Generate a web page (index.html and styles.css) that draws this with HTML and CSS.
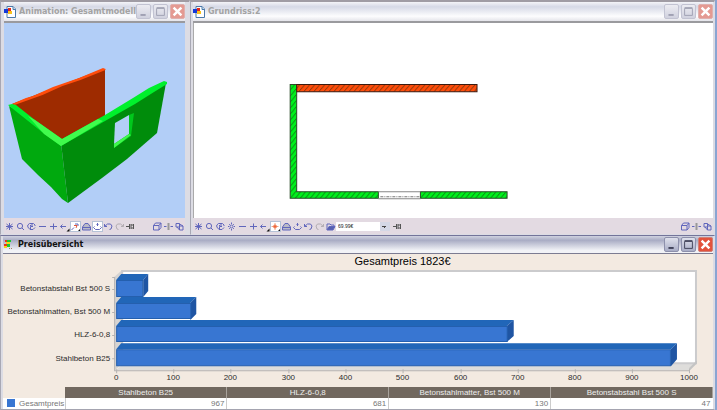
FILE: index.html
```
<!DOCTYPE html>
<html lang="de">
<head>
<meta charset="utf-8">
<title>Preisübersicht</title>
<link rel="stylesheet" href="styles.css">
</head>
<body>
<svg class="defs" aria-hidden="true">
  <defs>
    <symbol id="app" viewBox="0 0 12 12"><path d="M3 .5h6l2.500 2.500v8.500H3z" fill="#fff" stroke="#4b78a8"/><path d="M9 .5v3h2.500" fill="#cfe6f5" stroke="#4b78a8"/><path d="M0 3h4v4H0z" fill="#1238d8"/><path d="M4 2h3v3H4z" fill="#e3291c"/><path d="M4 5h4v3H4z" fill="#f8c21c"/></symbol>
    <symbol id="price" viewBox="0 0 12 12"><path d="M2 1h3v2H2zM1 5h3v2H1z" fill="#e8321e"/><path d="M4 1h4v2H4zM4 5h3v3H4z" fill="#18c832"/><path d="M3 3h4v2H3zM1 7h3v2H1z" fill="#f5d31a"/><path d="M6 9h1v1H6zM8 9h1v1H8z" fill="#a08060"/></symbol>
    <symbol id="min" viewBox="0 0 15 14"><path d="M4 10h6v2H4z" fill="currentColor"/></symbol>
    <symbol id="max" viewBox="0 0 15 14"><path d="M3 3.500h9v8H3zM3 2.500h9" fill="none" stroke="currentColor"/></symbol>
    <symbol id="close" viewBox="0 0 15 14"><path d="M3 2.500l9 9M12 2.500l-9 9" stroke="#fff" stroke-width="2.800"/></symbol>
    <symbol id="star" viewBox="0 0 11 11"><path d="M2.500 3l6 5M8.500 3l-6 5M5.500 2v7M2 5.500h7"/></symbol>
    <symbol id="lens" viewBox="0 0 11 11"><circle cx="5" cy="5" r="2.600"/><path d="M7 7l2 2"/></symbol>
    <symbol id="hand" viewBox="0 0 11 11"><path d="M4 8.500L1.800 6V4l1.700-1.500h4L9 4v1M4 8.500h3l2-2M4 5l1-1h2M4.500 8V5.500H7"/></symbol>
    <symbol id="sun" viewBox="0 0 11 11"><circle cx="5.500" cy="5.500" r="1.500"/><path d="M5.500 1.500V3M5.500 8v1.500M2 5.500h1M8 5.500h1M3 3l.8.800M8 3l-.8.800M3 8l.8-.8M8 8l-.8-.8"/></symbol>
    <symbol id="minus" viewBox="0 0 11 11"><path d="M2 5.500h7"/></symbol>
    <symbol id="plus" viewBox="0 0 11 11"><path d="M2 5.500h7M5.500 2.500v6"/></symbol>
    <symbol id="move" viewBox="0 0 11 11"><path d="M1.500 5.500H7M3.500 3.500l-2 2 2 2"/><path d="M10.500 7.500v3h-3z" fill="#111" stroke="none"/></symbol>
    <symbol id="walk" viewBox="0 0 11 11"><path d="M1.500 9L4 6.500M5 3h3v2"/><path d="M4 4.500h3L6 7" stroke="#e0573c"/><path d="M10.500 7.500v3h-3z" fill="#111" stroke="none"/></symbol>
    <symbol id="target" viewBox="0 0 11 11"><path d="M5 2v7M1.500 5.500h7" stroke="#f0a080"/><circle cx="5" cy="5.500" r="1.500" fill="#f0643c" stroke="#f0845a"/><path d="M10.500 7.500v3h-3z" fill="#111" stroke="none"/></symbol>
    <symbol id="house" viewBox="0 0 11 11"><path d="M1.500 6L4 2.500h3L9.500 6v3h-8z" fill="#b9b9c6"/><path d="M1.500 6.500h8"/></symbol>
    <symbol id="orbit" viewBox="0 0 11 11"><path d="M5.500 2v3M4.500 3.500h2M2.500 5.500l-1 1 2 2h4l2-2-1-1"/></symbol>
    <symbol id="undo" viewBox="0 0 11 11"><path d="M1.500 3v2.500H4M1.500 5.500l3-2.500h3l1.500 2-1 3-1.500.5"/></symbol>
    <symbol id="redo" viewBox="0 0 11 11"><path d="M9.500 3v2.500H7M9.500 5.500L6.500 3h-3L2 5l1 3 1.500.5"/></symbol>
    <symbol id="folder" viewBox="0 0 11 11"><path d="M2 9V3h3l1 1h3v2" fill="none"/><path d="M2 9l2-3.500h6L8 9z" fill="#5661b0"/></symbol>
    <symbol id="pin" viewBox="0 0 11 11"><path d="M1 5.500h3M4.500 3v5M6 3v5M8.500 3v5M6 4h3M6 7h3"/></symbol>
    <symbol id="cube" viewBox="0 0 11 11"><path d="M1.500 4.500h5.500V9H1.500zM1.500 4.500l2-2.500H9L7 4.500M9 2v4.500L7 9"/></symbol>
    <symbol id="split" viewBox="0 0 11 11"><path d="M5.500 2v7" stroke="#999" stroke-width="2"/><path d="M1 5.500h2.500M7.500 5.500H10"/></symbol>
    <symbol id="copy" viewBox="0 0 11 11"><path d="M2 2.500h3.500V6H2zM5.500 5H9v4H5.500zM3 6l2.500 3M5.500 3L9 5"/></symbol>
  </defs>
</svg>
<main class="desk">
  <section class="win win-model" aria-label="Animation">
    <header class="bar">
      <svg class="logo"><use href="#app"/></svg>
      <h1>Animation: Gesamtmodell</h1>
      <button class="ctl" aria-label="Minimieren"><svg><use href="#min"/></svg></button>
      <button class="ctl" aria-label="Maximieren"><svg><use href="#max"/></svg></button>
      <button class="ctl ctl-close" aria-label="Schließen"><svg><use href="#close"/></svg></button>
    </header>
    <div class="view view-model">
      <svg viewBox="4 23 181 195" preserveAspectRatio="xMinYMin meet" role="img" aria-label="3D-Modell">
        <path d="M12 104L103 69l2 1v50l-43 24z" fill="#9e2b00"/>
        <path d="M12 104l14-6 7-2 20-9 26-9 24-10 2.500 1v1l-25 10-18 6-20 9-28 10z" fill="#ff4d0c"/>
        <path d="M9 106l4 2 48 35 7 60-6-4-11-12-13-12-16-16z" fill="#00a90e"/>
        <path d="M61 143l40-23 65-37-9 50-30 26-25 19-34 25z" fill="#008c0b"/>
        <path d="M8 105l4-1 4 1 19 15 27 19 43-24 28-17 16-10 15-7 3 1v2l-13 8-19 12-30 17-44 25-19-14z" fill="#00f02c"/>
        <path d="M28 116l7 4 27 19 36-20 5 2-42 25-17-12z" fill="#41fb4d"/>
        <path d="M129 115l5-2-3 23-17 12v-4l15-10z" fill="#00c81c"/>
        <path d="M115 123l14-8v19l-15 10z" fill="#b3cff7"/>
        <path d="M114 144l15-10 2 1-17 13z" fill="#3ff84c"/>
      </svg>
    </div>
    <div class="tools" role="toolbar" aria-label="Ansicht">
      <button aria-label="Alles zeigen"><svg><use href="#star"/></svg></button>
      <button aria-label="Lupe"><svg><use href="#lens"/></svg></button>
      <button aria-label="Verschieben"><svg><use href="#hand"/></svg></button>
      <button aria-label="Kleiner"><svg><use href="#minus"/></svg></button>
      <button aria-label="Größer"><svg><use href="#plus"/></svg></button>
      <button aria-label="Bewegen"><svg><use href="#move"/></svg></button>
      <button class="on" aria-label="Gehen"><svg><use href="#walk"/></svg></button>
      <button aria-label="Haus"><svg><use href="#house"/></svg></button>
      <button class="on" aria-label="Umkreisen"><svg><use href="#orbit"/></svg></button>
      <button aria-label="Zurück"><svg><use href="#undo"/></svg></button>
      <button class="off" aria-label="Vor"><svg><use href="#redo"/></svg></button>
      <button class="dark" aria-label="Anheften"><svg><use href="#pin"/></svg></button>
      <span class="push"></span>
      <button aria-label="Perspektive"><svg><use href="#cube"/></svg></button>
      <button aria-label="Teilen"><svg><use href="#split"/></svg></button>
      <button aria-label="Fenster"><svg><use href="#copy"/></svg></button>
    </div>
  </section>

  <section class="win win-plan" aria-label="Grundriss">
    <header class="bar">
      <svg class="logo"><use href="#app"/></svg>
      <h1>Grundriss:2</h1>
      <button class="ctl" aria-label="Minimieren"><svg><use href="#min"/></svg></button>
      <button class="ctl" aria-label="Maximieren"><svg><use href="#max"/></svg></button>
      <button class="ctl ctl-close" aria-label="Schließen"><svg><use href="#close"/></svg></button>
    </header>
    <div class="view">
      <svg viewBox="194 23 518 194" preserveAspectRatio="xMinYMin meet" role="img" aria-label="Grundriss">
        <defs>
          <pattern id="hatch" width="5" height="6" patternUnits="userSpaceOnUse"><path d="M-1 7.200L6-1.200M-3.500 4.200L1-1.200M4 7.200L8.500 1.800" stroke="#1b2a10" stroke-width=".8" opacity=".75"/></pattern>
        </defs>
        <path d="M290 84.500h6.500v107H378v6.500h-88zM420 191.500h86.500v6.500H420z" fill="#00f01c"/>
        <path d="M290 84.500h6.500v107H378v6.500h-88zM420 191.500h86.500v6.500H420z" fill="url(#hatch)" stroke="#2b4a28"/>
        <path d="M296.500 84.500h180v7h-180z" fill="#ff4c0a"/>
        <path d="M296.500 84.500h180v7h-180z" fill="url(#hatch)" stroke="#3b1a10"/>
        <path d="M378 191.500h42M378 198.500h42" stroke="#888"/>
        <path d="M380 196.500h39" stroke="#777" stroke-dasharray="3 1 1 1"/>
      </svg>
    </div>
    <div class="tools" role="toolbar" aria-label="Grundriss-Werkzeuge">
      <button aria-label="Alles zeigen"><svg><use href="#star"/></svg></button>
      <button aria-label="Lupe"><svg><use href="#lens"/></svg></button>
      <button aria-label="Verschieben"><svg><use href="#hand"/></svg></button>
      <button aria-label="Licht"><svg><use href="#sun"/></svg></button>
      <button aria-label="Kleiner"><svg><use href="#minus"/></svg></button>
      <button aria-label="Größer"><svg><use href="#plus"/></svg></button>
      <button aria-label="Bewegen"><svg><use href="#move"/></svg></button>
      <button class="on" aria-label="Ziel"><svg><use href="#target"/></svg></button>
      <button aria-label="Haus"><svg><use href="#house"/></svg></button>
      <button aria-label="Umkreisen"><svg><use href="#orbit"/></svg></button>
      <button aria-label="Zurück"><svg><use href="#undo"/></svg></button>
      <button class="off" aria-label="Vor"><svg><use href="#redo"/></svg></button>
      <button aria-label="Öffnen"><svg><use href="#folder"/></svg></button>
      <select class="zoom" aria-label="Maßstab"><option>69.99€</option></select>
      <button class="dark" aria-label="Anheften"><svg><use href="#pin"/></svg></button>
      <span class="push"></span>
      <button aria-label="Perspektive"><svg><use href="#cube"/></svg></button>
      <button aria-label="Teilen"><svg><use href="#split"/></svg></button>
      <button aria-label="Fenster"><svg><use href="#copy"/></svg></button>
    </div>
  </section>

  <section class="win win-price" aria-label="Preisübersicht">
    <header class="bar">
      <svg class="logo"><use href="#price"/></svg>
      <h1>Preisübersicht</h1>
      <button class="ctl" aria-label="Minimieren"><svg><use href="#min"/></svg></button>
      <button class="ctl" aria-label="Maximieren"><svg><use href="#max"/></svg></button>
      <button class="ctl ctl-close" aria-label="Schließen"><svg><use href="#close"/></svg></button>
    </header>
    <div class="report">
      <svg class="chart" viewBox="4 254 709 133" role="img" aria-label="Gesamtpreis 1823€">
        <text class="chart-title" x="403" y="265">Gesamtpreis 1823€</text>
        <path d="M115 277l8-7v93l-8 8z" fill="#d6d4d2"/>
        <path d="M117 370l7-7h573l-7 7z" fill="#dedddb"/>
        <path d="M123 271h573v92H123z" fill="#fff" stroke="#cbcbcd" stroke-width="2"/>
        <path d="M690 370l7-7v-3l-8 8z" fill="#c4c4c4"/>
        <path d="M115.500 277v94M115 370.500h575M113 277.500h2M113 289.500h2M113 312.500h2M113 335.500h2M113 358.500h2M117.500 369v4M174.500 369v4M231.500 369v4M289.500 369v4M346.500 369v4M403.500 369v4M461.500 369v4M518.500 369v4M575.500 369v4M632.500 369v4M689.500 369v4" fill="none" stroke="#b5b3b2"/>
        <g fill="#2166b8"><path d="M117 280l5-6h27l-5 6zM117 303l5-6h75l-6 6zM117 326l5-6h392l-7 6zM117 349l5-6h555l-6 6z"/></g>
        <g fill="#1f55a3"><path d="M144 280l5-6v17l-5 6zM191 303l6-6v17l-6 6zM507 326l7-6v16l-7 6zM671 349l6-6v16l-6 7z"/></g>
        <g fill="#3876d2" stroke="#245fae"><path d="M117.500 280.500h26v16h-26zM117.500 303.500h74v15h-74zM117.500 326.500h390v15h-390zM117.500 349.500h553v16h-553z"/></g>
        <g class="cat"><text x="111" y="291">Betonstabstahl Bst 500 S</text><text x="111" y="314">Betonstahlmatten, Bst 500 M</text><text x="111" y="337">HLZ-6-0,8</text><text x="111" y="361">Stahlbeton B25</text></g>
        <g class="val"><text x="117" y="380">0</text><text x="174" y="380">100</text><text x="231" y="380">200</text><text x="289" y="380">300</text><text x="346" y="380">400</text><text x="403" y="380">500</text><text x="461" y="380">600</text><text x="518" y="380">700</text><text x="575" y="380">800</text><text x="632" y="380">900</text><text x="689" y="380">1000</text></g>
      </svg>
      <table class="sums">
        <thead><tr><td></td><th scope="col">Stahlbeton B25</th><th scope="col">HLZ-6-0,8</th><th scope="col">Betonstahlmatter, Bst 500 M</th><th scope="col">Betonstabstahl Bst 500 S</th></tr></thead>
        <tbody><tr><th scope="row"><i class="key"></i>Gesamtpreis</th><td>967</td><td>681</td><td>130</td><td>47</td></tr></tbody>
      </table>
    </div>
  </section>
</main>
</body>
</html>
```
FILE: styles.css
```
* { box-sizing: border-box; }
body {
  margin: 0;
  padding: 0 2px 0 0;
  background: #8aa5d2;
  font-family: "Liberation Sans", Arial, sans-serif;
  font-size: 9px;
}
.defs { position: absolute; width: 0; height: 0; }
.desk {
  display: grid;
  grid-template-columns: 190fr 525fr;
  grid-template-rows: 1fr auto;
  min-height: 100vh;
  background: #dcdce4;
}
.win {
  display: flex;
  flex-direction: column;
  min-width: 0;
  border: 1px solid #dcdce4;
  border-top: 2px solid #a09ca4;
  border-left: 1px solid #a8a8b4;
  padding: 0 1px 0 2px;
}
.win-model { padding: 0 4px 0 3px; }
.bar {
  display: flex;
  align-items: center;
  height: 21px;
  background: linear-gradient(#f4f4f8, #d6d9e6 25%, #fdfdfe 75%, #e4e4ea);
  border-bottom: 2px solid #9a9a9e;
  color: #a3a3a3;
}
.logo { flex: none; width: 12px; height: 12px; margin-right: 3px; }
.bar h1 {
  flex: 1;
  min-width: 0;
  margin: 0;
  font: bold 8px/16px "DejaVu Sans", sans-serif;
  white-space: nowrap;
}
.ctl {
  flex: none;
  width: 15px;
  height: 15px;
  margin-left: 2px;
  padding: 0;
  border: 1px solid #c2c3d2;
  border-radius: 2px;
  background: linear-gradient(#ececf2, #d0d1de);
  color: #9a9bae;
}
.ctl svg { display: block; width: 100%; height: 100%; }
.ctl-close { background: #e49a92; border-color: #e0b0ae; }
.view { flex: 1; background: #fff; border-left: 1px solid #aaa; }
.view svg { display: block; width: 100%; }
.view-model { background: #b2cef7; border-left: 0; }
.tools {
  display: flex;
  align-items: center;
  height: 16px;
  background: #e3dae2;
}
.tools button {
  flex: none;
  width: 11px;
  height: 11px;
  padding: 0;
  border: 0;
  background: none;
  color: #6066bc;
}
.tools button svg { display: block; width: 11px; height: 11px; fill: none; stroke: currentColor; }
.tools .on { background: #fff; outline: 1px solid #b5c2d6; outline-offset: -1px; }
.tools .off { color: #b3adb3; }
.tools .dark { color: #555; }
.push { flex: 1; }
.zoom {
  appearance: none;
  width: 54px;
  height: 9px;
  margin-right: 2px;
  padding: 0 0 0 2px;
  border: 0;
  border-radius: 0;
  background:
    linear-gradient(45deg, transparent 50%, #444 50%) 46px 4px / 2px 2px no-repeat,
    linear-gradient(-45deg, transparent 50%, #444 50%) 48px 4px / 2px 2px no-repeat,
    linear-gradient(90deg, #fff 44px, #d4d8e6 44px);
  color: #222;
  font: 5px/8px "Liberation Sans", sans-serif;
}
.win-price {
  grid-column: 1 / -1;
  border-top: 1px solid #74749a;
  border-bottom: 1px solid #a4a4b0;
}
.win-price .bar {
  height: 18px;
  background: linear-gradient(#d0d2e0, #a9acc4 25%, #f2f3f7 85%);
  border-bottom: 1px solid #7c7c92;
  color: #111;
}
.win-price .ctl { border-color: #8d90ab; background: linear-gradient(#dfe1ec, #a9adc6); color: #34364e; }
.win-price .ctl-close { background: #e2523c; border-color: #d08078; }
.report { background: #f3eae1; }
.chart { display: block; width: 100%; }
.chart text { fill: #2c2c2c; font-size: 8px; }
.chart .chart-title { font-size: 11px; fill: #000; text-anchor: middle; }
.cat { text-anchor: end; }
.val { text-anchor: middle; }
.sums { width: 100%; table-layout: fixed; border-collapse: collapse; font-size: 8px; line-height: 10px; }
.sums th, .sums td { padding: 0 2px; height: 11px; font-weight: normal; white-space: nowrap; }
.sums thead td { width: 62px; }
.sums thead th { background: #71685f; color: #eee; border-right: 1px solid #a8a29c; }
.sums tbody tr { background: #fff; color: #777; }
.sums tbody td { text-align: right; border-left: 1px solid #ccc; }
.sums tbody th { text-align: left; }
.key { display: inline-block; width: 8px; height: 8px; margin: 0 4px 0 2px; background: #3876d2; vertical-align: -1px; }
```
